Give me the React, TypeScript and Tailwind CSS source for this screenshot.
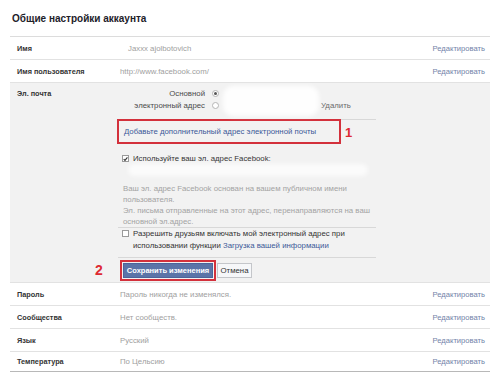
import type { ReactNode } from 'react';

const FONT = { fontFamily: '"Liberation Sans", Arial, sans-serif' };

function Row({ label, value, valueClass = '' }: { label: string; value: string; valueClass?: string }) {
  return (
    <div className="flex h-[23px] items-center border-b border-[#e2e2e2]">
      <div className="w-[110px] pl-[7px] text-[7.3px] font-bold text-[#333]">{label}</div>
      <div className={`flex-1 text-[#a0a0a0] ${valueClass}`}>{value}</div>
      <a className="pr-[5px] text-[7.6px] text-[#7283a9]">Редактировать</a>
    </div>
  );
}

function Radio({ checked }: { checked?: boolean }) {
  return (
    <span className="flex h-[7px] w-[7px] items-center justify-center rounded-full border border-[#b5b5b5] bg-white">
      {checked && <span className="h-[3px] w-[3px] rounded-full bg-[#555]" />}
    </span>
  );
}

function Check({ checked }: { checked?: boolean }) {
  return (
    <span className="flex h-[7px] w-[7px] shrink-0 items-center justify-center border border-[#9a9a9a] bg-white">
      {checked && (
        <svg width="6" height="6" viewBox="0 0 6 6">
          <path d="M0.8 3.1 L2.4 4.7 L5.3 1.1" fill="none" stroke="#333" strokeWidth="1.3" />
        </svg>
      )}
    </span>
  );
}

function Section({ children, className = '' }: { children: ReactNode; className?: string }) {
  return <div className={`border-t border-[#d8d8d8] ${className}`}>{children}</div>;
}

export default function App() {
  return (
    <div className="h-[373px] w-[500px] overflow-hidden bg-white text-[7.8px] leading-[11px]" style={FONT}>
      <div className="px-[10px]">
        <div className="h-[36px] pl-[2px] pt-[12px] text-[10px] font-bold leading-[13px] text-[#1d2129]">
          Общие настройки аккаунта
        </div>
        <div className="border-t border-[#dcdcdc]">
          <Row label="Имя" value="Jaxxx ajolbotovich" valueClass="pl-[8px]" />
          <Row label="Имя пользователя" value="http://www.facebook.com/" />

          <div className="flex h-[200px] border-b border-[#e2e2e2] bg-[#f2f2f2]">
            <div className="w-[108px] pl-[7px] pt-[5px] text-[7.3px] font-bold text-[#333]">Эл. почта</div>
            <div className="w-[258px]">
              {/* primary address */}
              <div className="flex h-[36px] pt-[5px] leading-[12px]">
                <div className="w-[87px] text-right text-[#4a4a4a]">
                  Основной
                  <br />
                  электронный адрес
                </div>
                <div className="ml-[7px] flex flex-col gap-[5px] pt-[2px]">
                  <Radio checked />
                  <Radio />
                </div>
                <div className="ml-[4px] mt-[-2px] h-[30px] w-[96px] rounded-[10px] bg-white/90 blur-[2px]" />
                <a className="self-start pl-[2px] pt-[12px] text-[#6b6b6b]">Удалить</a>
              </div>

              {/* add address */}
              <Section>
                <div className="flex items-center">
                  <div className="-ml-px -mt-px flex h-[25px] w-[224px] items-center border-2 border-[#d3313c] pl-[5px] text-[#3b5998]">
                    Добавьте дополнительный адрес электронной почты
                  </div>
                  <span className="ml-[4px] text-[13px] font-bold text-[#de2a32]">1</span>
                </div>

                <div className="mt-[9px] flex items-center gap-[4px] pl-[4px] text-[#333]">
                  <Check checked />
                  <span>Используйте ваш эл. адрес Facebook:</span>
                </div>
                <div className="ml-[10px] h-[12px] w-[240px] rounded-full bg-white/70 blur-[2px]" />
                <div className="mt-[7px] whitespace-nowrap pl-[5px] text-[#a3a3a3]">
                  Ваш эл. адрес Facebook основан на вашем публичном имени
                  <br />
                  пользователя.
                  <br />
                  Эл. письма отправленные на этот адрес, перенаправляются на ваш
                  <br />
                  основной эл.адрес.
                </div>
              </Section>

              {/* allow friends */}
              <Section className="pb-[5px]">
                <div className="flex gap-[4px] pl-[4px] leading-[12px] text-[#333]">
                  <span className="pt-[2px]">
                    <Check />
                  </span>
                  <span className="whitespace-nowrap">
                    Разрешить друзьям включать мой электронный адрес при
                    <br />
                    использовании функции <span className="text-[#3b5998]">Загрузка вашей информации</span>
                  </span>
                </div>
              </Section>

              {/* buttons */}
              <Section className="pt-[2px]">
                <div className="relative flex items-center pl-[2px]">
                  <span className="absolute left-[-23px] top-[1px] text-[14px] font-bold leading-[19px] text-[#de2a32]">2</span>
                  <div className="border-2 border-[#d3313c] p-[1px]">
                    <div className="flex h-[15px] w-[90px] items-center justify-center border border-[#4c649b] bg-[#5b74a8] text-[7.5px] font-bold text-white">
                      Сохранить изменения
                    </div>
                  </div>
                  <div className="ml-[1px] flex h-[15px] w-[35px] items-center justify-center border border-[#c4c6ca] bg-[#f6f7f9] text-[#333]">
                    Отмена
                  </div>
                </div>
              </Section>
            </div>
          </div>

          <Row label="Пароль" value="Пароль никогда не изменялся." />
          <Row label="Сообщества" value="Нет сообществ." />
          <Row label="Язык" value="Русский" />
          <div className="flex h-[20px] items-center border-b border-[#b8b8b8]">
            <div className="w-[110px] pl-[7px] text-[7.3px] font-bold text-[#333]">Температура</div>
            <div className="flex-1 text-[#a0a0a0]">По Цельсию</div>
            <a className="pr-[5px] text-[7.6px] text-[#7283a9]">Редактировать</a>
          </div>
        </div>
      </div>
    </div>
  );
}
